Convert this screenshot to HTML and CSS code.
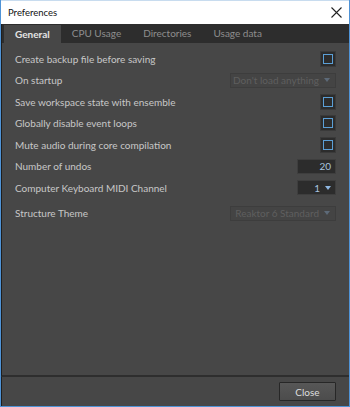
FILE: index.html
```html
<!DOCTYPE html>
<html lang="en">
<head>
    <meta charset="UTF-8">
    <title>Preferences</title>
    <link rel="stylesheet" href="styles.css">
</head>
<body>
    <div class="window">
        <div class="titlebar">
            <span class="title">Preferences</span>
            <span class="close-x">
                <svg width="11" height="11" viewBox="0 0 11 11"><path d="M0.5 0.5 L10.5 10.5 M10.5 0.5 L0.5 10.5" stroke="#222" stroke-width="1.1"/></svg>
            </span>
        </div>
        <div class="tabs">
            <div class="tab active">General</div>
            <div class="tab">CPU Usage</div>
            <div class="tab">Directories</div>
            <div class="tab">Usage data</div>
        </div>
        <div class="panel">
            <div class="row">
                <span class="label">Create backup file before saving</span>
                <span class="check"><span class="mark"></span></span>
            </div>
            <div class="row">
                <span class="label">On startup</span>
                <span class="combo disabled wide">Don't load anything <span class="arrow"></span></span>
            </div>
            <div class="row">
                <span class="label">Save workspace state with ensemble</span>
                <span class="check"><span class="mark"></span></span>
            </div>
            <div class="row">
                <span class="label">Globally disable event loops</span>
                <span class="check"><span class="mark"></span></span>
            </div>
            <div class="row">
                <span class="label">Mute audio during core compilation</span>
                <span class="check"><span class="mark"></span></span>
            </div>
            <div class="row">
                <span class="label">Number of undos</span>
                <span class="field">20</span>
            </div>
            <div class="row">
                <span class="label">Computer Keyboard MIDI Channel</span>
                <span class="field">1 <span class="arrow"></span></span>
            </div>
            <div class="row spaced">
                <span class="label">Structure Theme</span>
                <span class="combo disabled wide">Reaktor 6 Standard <span class="arrow"></span></span>
            </div>
        </div>
        <div class="footer">
            <button class="close-btn">Close</button>
        </div>
    </div>
</body>
</html>
```

FILE: styles.css
```css
* {
    box-sizing: border-box;
}
body {
    margin: 0;
    font-family: Lato, "Noto Sans", sans-serif;
    font-size: 10px;
    background: #fff;
}
.window {
    width: 350px;
    height: 407px;
    display: flex;
    flex-direction: column;
    border: 1px solid #4f93d6;
    border-top: none;
}
.titlebar {
    height: 24px;
    background: #fff;
    display: flex;
    align-items: center;
    justify-content: space-between;
    padding: 0 6px 0 7px;
    border-top: 1px solid #c8dcef;
}
.title {
    font-size: 9.5px;
    color: #111;
}
.close-x {
    display: flex;
    margin-right: 1px;
}
.tabs {
    height: 19px;
    background: #2d2d2d;
    display: flex;
    padding-left: 2px;
    border-left: 1px solid #1e1e1e;
}
.tab {
    padding: 0 11px 0 11px;
    line-height: 19px;
    color: #8e8e8e;
}
.tab.active {
    background: #474747;
    color: #e4e4e4;
    font-weight: bold;
    margin-top: 1px;
    line-height: 18px;
}
.panel {
    flex: 1;
    background: #474747;
    padding: 5px 13px 0 13px;
    border-left: 1px solid #1e1e1e;
    border-bottom: 2px solid #2e2e2e;
}
.row {
    height: 21.5px;
    display: flex;
    align-items: center;
    justify-content: space-between;
}
.row.spaced {
    margin-top: 4px;
}
.label {
    color: #c8c8c8;
}
.check {
    width: 16px;
    height: 16px;
    background: #2c2c2c;
    border: 1px solid #3a3a3a;
    display: flex;
    align-items: center;
    justify-content: center;
}
.mark {
    width: 10px;
    height: 10px;
    border: 1.5px solid #5b9fd6;
}
.combo {
    height: 15px;
    border: 1px solid #3d3d3d;
    background: #444;
    display: flex;
    align-items: center;
    justify-content: flex-end;
    padding: 0 5px;
    gap: 5px;
    white-space: nowrap;
}
.combo.wide {
    width: 106px;
}
.combo.disabled {
    color: #5f5f5f;
}
.combo.disabled .arrow {
    border-top-color: #5d6a78;
}
.field {
    width: 39px;
    height: 15px;
    background: #2c2c2c;
    border: 1px solid #3e3e3e;
    color: #a9c3df;
    display: flex;
    align-items: center;
    justify-content: flex-end;
    padding: 0 4px;
    gap: 5px;
}
.arrow {
    width: 0;
    height: 0;
    border-left: 3.5px solid transparent;
    border-right: 3.5px solid transparent;
    border-top: 4px solid #8fb8e2;
}
.footer {
    height: 29px;
    background: #474747;
    display: flex;
    align-items: center;
    justify-content: flex-end;
    padding-right: 13px;
    border-left: 1px solid #1e1e1e;
}
.close-btn {
    width: 57px;
    height: 19px;
    background: linear-gradient(#575757, #4c4c4c);
    border: 1px solid #272727;
    border-radius: 1px;
    color: #dedede;
    font-family: Lato, "Noto Sans", sans-serif;
    font-size: 10px;
    padding: 0;
}
```
